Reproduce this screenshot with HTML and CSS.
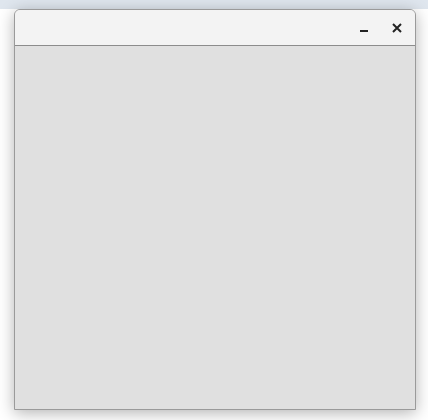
FILE: index.html
```html
<!DOCTYPE html>
<html>
<head>
<meta charset="utf-8">
<link rel="stylesheet" href="styles.css">
</head>
<body>
<div class="desktop">
  <div class="topstrip"></div>
  <div class="window">
    <div class="titlebar">
      <button class="ctl min" aria-label="Minimize">
        <svg width="10" height="10" viewBox="0 0 10 10"><rect x="1" y="7" width="8" height="2" fill="#222"/></svg>
      </button>
      <button class="ctl close" aria-label="Close">
        <svg width="10" height="10" viewBox="0 0 10 10"><path d="M1 1 L9 9 M9 1 L1 9" stroke="#222" stroke-width="2" fill="none"/></svg>
      </button>
    </div>
    <div class="content"></div>
  </div>
</div>
</body>
</html>
```
FILE: styles.css
```css
html, body {
  margin: 0;
  padding: 0;
  background: #ffffff;
  font-family: "Liberation Sans", Arial, sans-serif;
}
.desktop {
  width: 428px;
  height: 420px;
  position: relative;
  overflow: hidden;
  background: #ffffff;
}
.topstrip {
  height: 9px;
  background: #dfe6ee;
}
.window {
  position: absolute;
  left: 14px;
  top: 9px;
  width: 400px;
  height: 399px;
  border: 1px solid #9a9a9a;
  border-radius: 6px 6px 0 0;
  background: #e0e0e0;
  box-shadow: 0 3px 16px rgba(0,0,0,0.3);
  display: flex;
  flex-direction: column;
  overflow: hidden;
}
.titlebar {
  height: 35px;
  flex: none;
  background: #f3f3f3;
  border-bottom: 1px solid #8c8c8c;
  display: flex;
  justify-content: flex-end;
  align-items: center;
  gap: 13px;
  padding-right: 8px;
}
.ctl {
  width: 20px;
  height: 20px;
  border: 0;
  background: transparent;
  padding: 0;
  display: flex;
  align-items: center;
  justify-content: center;
}
.content {
  flex: 1;
  background: #e0e0e0;
}
```
